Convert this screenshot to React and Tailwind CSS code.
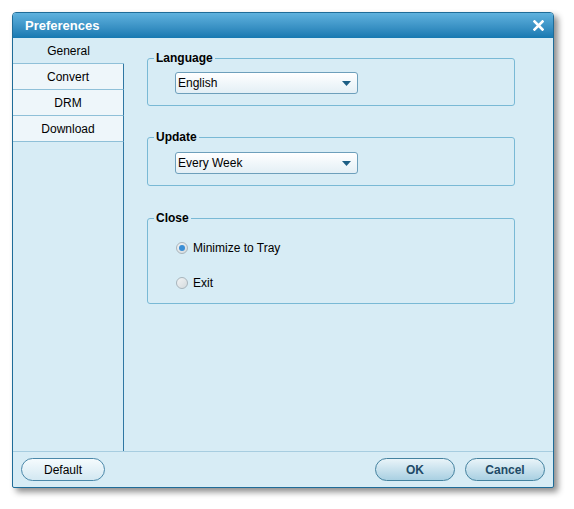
import { useState } from 'react';

/* 왼쪽 탭 목록 */
const TABS = ['General', 'Convert', 'DRM', 'Download'];

/* 드롭다운 (콤보박스) */
const Combo = ({ value }) => (
    <div className="w-[183px] h-[22px] ml-[27px] flex items-center justify-between pl-[2px] pr-[6px] border border-[#6d9fbb] rounded-[3px] bg-gradient-to-b from-white to-[#e3eff5] text-[12px] text-black">
        <span>{value}</span>
        <svg width="9" height="5" viewBox="0 0 9 5"><path d="M0 0h9L4.5 5z" fill="#1d5e84" /></svg>
    </div>
);

/* 그룹 박스 */
const Group = ({ title, className, children }) => (
    <fieldset className={`border border-[#79b9d5] rounded-[3px] px-0 ${className}`}>
        <legend className="ml-[6px] px-[2px] text-[12px] font-bold text-black leading-[14px]">{title}</legend>
        {children}
    </fieldset>
);

/* 라디오 버튼 */
const Radio = ({ checked, label, onClick }) => (
    <div onClick={onClick} className="flex items-center gap-[5px] ml-[28px] cursor-pointer">
        <span className="w-[12px] h-[12px] rounded-full border border-[#a8b4bb] bg-gradient-to-br from-[#f2f4f5] to-[#d4dadd] flex items-center justify-center">
            {checked && <span className="w-[6px] h-[6px] rounded-full bg-[#3a8fd6]" />}
        </span>
        <span className="text-[12px] text-black">{label}</span>
    </div>
);

const App = () => {
    const [tab, setTab] = useState('General');
    const [closeMode, setCloseMode] = useState('tray');

    return (
        <div className="w-[574px] h-[509px] bg-white pt-[12px] pl-[12px] font-['Liberation_Sans','Noto_Sans',sans-serif]">
            <div className="w-[542px] h-[476px] flex flex-col border border-[#1f6c98] rounded-t-[4px] rounded-b-[2px] bg-[#d7ecf5] shadow-[4px_4px_6px_rgba(0,0,0,0.45)] overflow-hidden">
                {/* 타이틀바 */}
                <div className="h-[25px] shrink-0 flex items-center justify-between pl-[12px] pr-[9px] bg-gradient-to-b from-[#5fb2de] to-[#1679b1]">
                    <span className="text-white font-bold text-[13px]">Preferences</span>
                    <svg width="11" height="11" viewBox="0 0 11 11"><path d="M1.5 1.5l8 8M9.5 1.5l-8 8" stroke="white" strokeWidth="2.6" strokeLinecap="square" /></svg>
                </div>

                <div className="flex flex-1 min-h-0">
                    {/* 사이드바 */}
                    <div className="w-[111px] shrink-0 flex flex-col">
                        {TABS.map(t => (
                            <div key={t}
                                onClick={() => setTab(t)}
                                className={`h-[26px] shrink-0 flex items-center justify-center text-[12px] text-black cursor-pointer border-b border-[#8fc0d8] ${t === tab ? 'bg-[#d7ecf5]' : 'bg-[#eef6fa] border-r border-r-[#2f77a3]'}`}>
                                {t}
                            </div>
                        ))}
                        <div className="flex-1 border-r border-[#2f77a3]" />
                    </div>

                    {/* 본문 */}
                    <div className="flex-1 flex flex-col pt-[13px] pl-[23px] pr-[38px]">
                        <Group title="Language" className="h-[55px]">
                            <div className="mt-[7px]"><Combo value="English" /></div>
                        </Group>
                        <Group title="Update" className="h-[56px] mt-[24px]">
                            <div className="mt-[8px]"><Combo value="Every Week" /></div>
                        </Group>
                        <Group title="Close" className="h-[93px] mt-[25px]">
                            <div className="flex flex-col gap-[17px] mt-[14px]">
                                <Radio label="Minimize to Tray" checked={closeMode === 'tray'} onClick={() => setCloseMode('tray')} />
                                <Radio label="Exit" checked={closeMode === 'exit'} onClick={() => setCloseMode('exit')} />
                            </div>
                        </Group>
                    </div>
                </div>

                {/* 하단 버튼 영역 */}
                <div className="h-[36px] shrink-0 flex items-center justify-between border-t border-[#a7cde0] pl-[8px] pr-[8px]">
                    <button className="w-[84px] h-[23px] rounded-full border border-[#4b88a9] bg-gradient-to-b from-[#f5fbfd] to-[#d3e8f2] text-[12px] text-black">
                        Default
                    </button>
                    <div className="flex gap-[10px]">
                        <button className="w-[80px] h-[23px] rounded-full border border-[#44829f] bg-gradient-to-b from-[#e9f4f9] to-[#a9d0e2] text-[12px] font-bold text-[#1f4a66]">
                            OK
                        </button>
                        <button className="w-[80px] h-[23px] rounded-full border border-[#44829f] bg-gradient-to-b from-[#e9f4f9] to-[#a9d0e2] text-[12px] font-bold text-[#1f4a66]">
                            Cancel
                        </button>
                    </div>
                </div>
            </div>
        </div>
    );
};

export default App;
